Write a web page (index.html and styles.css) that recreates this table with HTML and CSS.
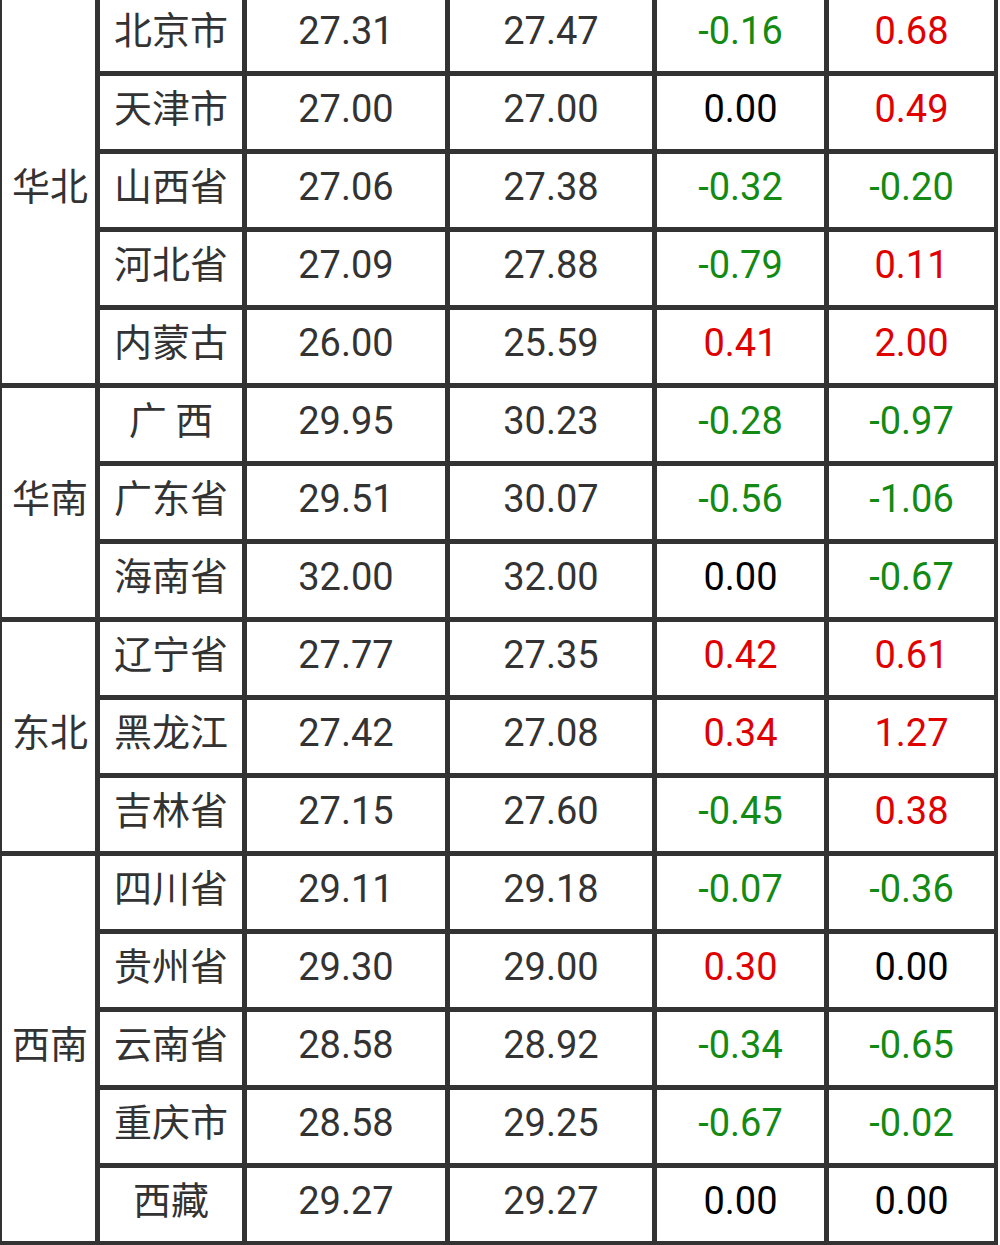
FILE: index.html
```html
<!DOCTYPE html>
<html lang="zh-CN">
<head>
<meta charset="utf-8">
<title>价格表</title>
<link rel="stylesheet" href="styles.css">
</head>
<body>
<div class="grid">
  <div class="region r5">华北</div>
  <div class="city">北京市</div><div class="num">27.31</div><div class="num">27.47</div><div class="chg down">-0.16</div><div class="chg up">0.68</div>
  <div class="city">天津市</div><div class="num">27.00</div><div class="num">27.00</div><div class="chg flat">0.00</div><div class="chg up">0.49</div>
  <div class="city">山西省</div><div class="num">27.06</div><div class="num">27.38</div><div class="chg down">-0.32</div><div class="chg down">-0.20</div>
  <div class="city">河北省</div><div class="num">27.09</div><div class="num">27.88</div><div class="chg down">-0.79</div><div class="chg up">0.11</div>
  <div class="city">内蒙古</div><div class="num">26.00</div><div class="num">25.59</div><div class="chg up">0.41</div><div class="chg up">2.00</div>

  <div class="region r3">华南</div>
  <div class="city">广 西</div><div class="num">29.95</div><div class="num">30.23</div><div class="chg down">-0.28</div><div class="chg down">-0.97</div>
  <div class="city">广东省</div><div class="num">29.51</div><div class="num">30.07</div><div class="chg down">-0.56</div><div class="chg down">-1.06</div>
  <div class="city">海南省</div><div class="num">32.00</div><div class="num">32.00</div><div class="chg flat">0.00</div><div class="chg down">-0.67</div>

  <div class="region r3">东北</div>
  <div class="city">辽宁省</div><div class="num">27.77</div><div class="num">27.35</div><div class="chg up">0.42</div><div class="chg up">0.61</div>
  <div class="city">黑龙江</div><div class="num">27.42</div><div class="num">27.08</div><div class="chg up">0.34</div><div class="chg up">1.27</div>
  <div class="city">吉林省</div><div class="num">27.15</div><div class="num">27.60</div><div class="chg down">-0.45</div><div class="chg up">0.38</div>

  <div class="region r5">西南</div>
  <div class="city">四川省</div><div class="num">29.11</div><div class="num">29.18</div><div class="chg down">-0.07</div><div class="chg down">-0.36</div>
  <div class="city">贵州省</div><div class="num">29.30</div><div class="num">29.00</div><div class="chg up">0.30</div><div class="chg flat">0.00</div>
  <div class="city">云南省</div><div class="num">28.58</div><div class="num">28.92</div><div class="chg down">-0.34</div><div class="chg down">-0.65</div>
  <div class="city">重庆市</div><div class="num">28.58</div><div class="num">29.25</div><div class="chg down">-0.67</div><div class="chg down">-0.02</div>
  <div class="city">西藏</div><div class="num">29.27</div><div class="num">29.27</div><div class="chg flat">0.00</div><div class="chg flat">0.00</div>
</div>
</body>
</html>
```
FILE: styles.css
```css
html, body {
  margin: 0;
  padding: 0;
  background: #ffffff;
}
body {
  width: 1000px;
  height: 1245px;
  overflow: hidden;
}
.grid {
  width: 998px;
  box-sizing: border-box;
  margin-top: -2px;
  display: grid;
  grid-template-columns: 93px 142px 198px 202px 167px 165px;
  grid-auto-rows: 73px;
  gap: 5px;
  padding: 0 4px 5px 2px;
  background: #333333;
}
.grid > div {
  background: #ffffff;
  display: flex;
  align-items: center;
  justify-content: center;
  padding-bottom: 8px;
  box-sizing: border-box;
  white-space: pre;
}
.region, .city {
  font-family: "Noto Sans CJK SC", "Noto Sans", sans-serif;
  font-size: 38px;
  color: #333333;
}
.grid > .region, .grid > .city { padding-bottom: 14px; }
.region { padding-left: 3px; }
.r5 { grid-row: span 5; }
.r3 { grid-row: span 3; }
.num {
  font-family: Roboto, "Noto Sans", sans-serif;
  font-size: 38px;
  color: #333333;
}
.chg {
  font-family: Roboto, "Noto Sans", sans-serif;
  font-size: 38px;
}
.up { color: #e00000; }
.down { color: #138a13; }
.flat { color: #000000; }
```
